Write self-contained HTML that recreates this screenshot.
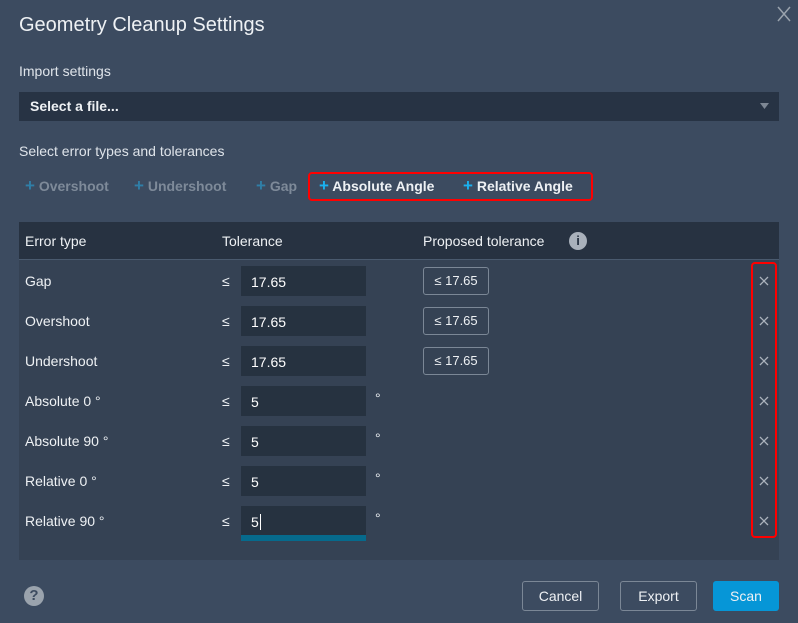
<!DOCTYPE html>
<html><head><style>
*{margin:0;padding:0;box-sizing:border-box}
body{width:798px;height:623px;background:#3c4b60;font-family:"Liberation Sans",sans-serif;color:#eef1f4;position:relative;overflow:hidden;font-size:14px}
.a{position:absolute;white-space:nowrap}
.inp{position:absolute;left:241px;width:125px;height:30px;background:#263240;color:#fff;font-size:14px;padding:8px 10px;}
.pb{position:absolute;left:423px;width:66px;height:28px;border:1px solid #7b8796;border-radius:3px;font-size:13px;text-align:center;line-height:26px}
.x{position:absolute;left:759px;}
.btn{position:absolute;top:581px;height:30px;border:1px solid #7b8796;border-radius:3px;text-align:center;line-height:28px;font-size:14px}
.p{font-size:17px;line-height:14px}
</style></head><body>
<div class="a" style="left:19px;top:14px;font-size:20px">Geometry Cleanup Settings</div>
<svg class="a" style="left:777px;top:6px" width="14" height="16"><path d="M1 1L13 15M13 1L1 15" stroke="#9aa3ad" stroke-width="1.5"/></svg>
<div class="a" style="left:19px;top:63px;color:#dfe4ea">Import settings</div>
<div class="a" style="left:19px;top:92px;width:760px;height:29px;background:#273344"></div>
<div class="a" style="left:30px;top:98px;font-weight:bold;font-size:14px">Select a file...</div>
<svg class="a" style="left:760px;top:103px" width="9" height="6"><path d="M0 0H9L4.5 6Z" fill="#7d8794"/></svg>
<div class="a" style="left:19px;top:143px;color:#dfe4ea">Select error types and tolerances</div>
<div class="a" style="left:25px;top:178px;font-weight:bold;color:#7e8a99"><span class="p" style="color:#2f7fa8">+</span> Overshoot</div>
<div class="a" style="left:134px;top:178px;font-weight:bold;color:#7e8a99"><span class="p" style="color:#2f7fa8">+</span> Undershoot</div>
<div class="a" style="left:256px;top:178px;font-weight:bold;color:#7e8a99"><span class="p" style="color:#2f7fa8">+</span> Gap</div>
<div class="a" style="left:308px;top:172px;width:285px;height:29px;border:2px solid #f00;border-radius:4px"></div>
<div class="a" style="left:319px;top:178px;font-weight:bold"><span class="p" style="color:#1ab1f0">+</span> Absolute Angle</div>
<div class="a" style="left:463px;top:178px;font-weight:bold"><span class="p" style="color:#1ab1f0">+</span> Relative Angle</div>
<div class="a" style="left:19px;top:222px;width:760px;height:338px;background:#354254"></div>
<div class="a" style="left:19px;top:222px;width:760px;height:38px;background:#273241;border-bottom:1px solid #4a5a6e"></div>
<div class="a" style="left:25px;top:233px">Error type</div>
<div class="a" style="left:222px;top:233px">Tolerance</div>
<div class="a" style="left:423px;top:233px">Proposed tolerance</div>
<div class="a" style="left:569px;top:232px;width:18px;height:18px;border-radius:50%;background:#a9b1bb;color:#273241;font-weight:bold;font-size:13px;text-align:center;line-height:18px">i</div>

<div class="a" style="left:25px;top:273px">Gap</div><div class="a" style="left:222px;top:273px">≤</div><div class="inp" style="top:266px">17.65</div><div class="pb" style="top:267px">≤ 17.65</div><svg class="x" style="top:276px" width="10" height="10"><path d="M1 1L9 9M9 1L1 9" stroke="#aab2bc" stroke-width="1.3"/></svg>
<div class="a" style="left:25px;top:313px">Overshoot</div><div class="a" style="left:222px;top:313px">≤</div><div class="inp" style="top:306px">17.65</div><div class="pb" style="top:307px">≤ 17.65</div><svg class="x" style="top:316px" width="10" height="10"><path d="M1 1L9 9M9 1L1 9" stroke="#aab2bc" stroke-width="1.3"/></svg>
<div class="a" style="left:25px;top:353px">Undershoot</div><div class="a" style="left:222px;top:353px">≤</div><div class="inp" style="top:346px">17.65</div><div class="pb" style="top:347px">≤ 17.65</div><svg class="x" style="top:356px" width="10" height="10"><path d="M1 1L9 9M9 1L1 9" stroke="#aab2bc" stroke-width="1.3"/></svg>
<div class="a" style="left:25px;top:393px">Absolute 0 °</div><div class="a" style="left:222px;top:393px">≤</div><div class="inp" style="top:386px">5</div><div class="a" style="left:375px;top:390px">°</div><svg class="x" style="top:396px" width="10" height="10"><path d="M1 1L9 9M9 1L1 9" stroke="#aab2bc" stroke-width="1.3"/></svg>
<div class="a" style="left:25px;top:433px">Absolute 90 °</div><div class="a" style="left:222px;top:433px">≤</div><div class="inp" style="top:426px">5</div><div class="a" style="left:375px;top:430px">°</div><svg class="x" style="top:436px" width="10" height="10"><path d="M1 1L9 9M9 1L1 9" stroke="#aab2bc" stroke-width="1.3"/></svg>
<div class="a" style="left:25px;top:473px">Relative 0 °</div><div class="a" style="left:222px;top:473px">≤</div><div class="inp" style="top:466px">5</div><div class="a" style="left:375px;top:470px">°</div><svg class="x" style="top:476px" width="10" height="10"><path d="M1 1L9 9M9 1L1 9" stroke="#aab2bc" stroke-width="1.3"/></svg>
<div class="a" style="left:25px;top:513px">Relative 90 °</div><div class="a" style="left:222px;top:513px">≤</div><div class="inp" style="top:506px;height:35px;border-bottom:6px solid #066a8c">5<span style="border-left:1px solid #fff;margin-left:1px"></span></div><div class="a" style="left:375px;top:510px">°</div><svg class="x" style="top:516px" width="10" height="10"><path d="M1 1L9 9M9 1L1 9" stroke="#aab2bc" stroke-width="1.3"/></svg>
<div class="a" style="left:751px;top:262px;width:26px;height:276px;border:2px solid #f00;border-radius:4px"></div>

<div class="a" style="left:24px;top:586px;width:20px;height:20px;border-radius:50%;background:#9aa3ad;color:#3c4b60;font-weight:bold;font-size:15px;text-align:center;line-height:20px">?</div>
<div class="btn" style="left:522px;width:77px">Cancel</div>
<div class="btn" style="left:620px;width:77px">Export</div>
<div class="btn" style="left:713px;width:66px;background:#0696d7;border-color:#0696d7">Scan</div>
</body></html>
